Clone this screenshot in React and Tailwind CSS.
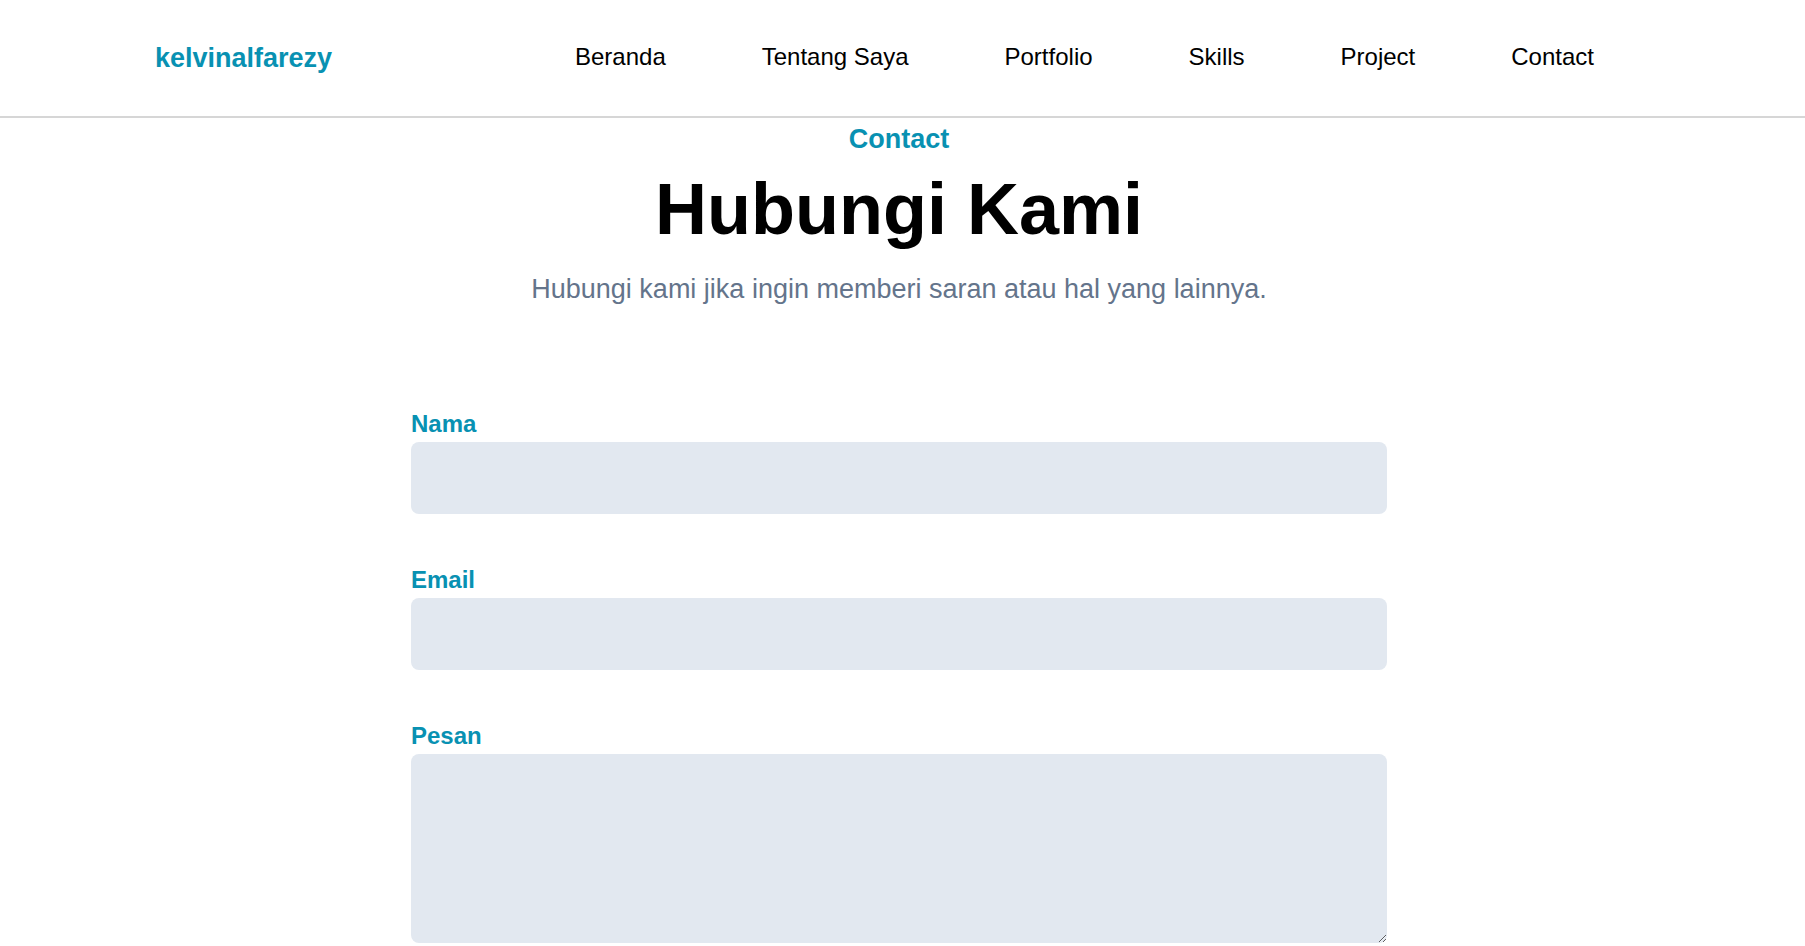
import React from "react";

const navItems = ["Beranda", "Tentang Saya", "Portfolio", "Skills", "Project", "Contact"];

const Header = () => (
  <header className="h-[118px] flex items-center justify-between pl-[155px] pr-[211px] pt-[1px] border-b-2 border-[#d6d6d6] bg-white">
    <a href="#" className="text-[27px] font-bold text-[#0891b2] leading-none">kelvinalfarezy</a>
    <nav>
      <ul className="flex items-center gap-24">
        {navItems.map((item) => (
          <li key={item}>
            <a href="#" className="text-[24px] text-black leading-none">{item}</a>
          </li>
        ))}
      </ul>
    </nav>
  </header>
);

const Field = ({ label, children, last }) => (
  <div className={last ? "" : "mb-12"}>
    <label className="block text-[24px] leading-[36px] font-bold text-[#0891b2]">{label}</label>
    {children}
  </div>
);

export default function App() {
  return (
    <div className="min-h-screen bg-white text-black" style={{ fontFamily: '"Liberation Sans", Arial, sans-serif' }}>
      <Header />
      <main className="pr-[7px] pt-[1px]">
        <section className="flex flex-col items-center text-center">
          <div className="text-[27px] leading-[40px] font-bold text-[#0891b2]">Contact</div>
          <h1 className="mt-[14px] text-[72px] leading-none font-bold">Hubungi Kami</h1>
          <p className="mt-[24px] text-[27px] leading-[40px] text-[#64748b]">
            Hubungi kami jika ingin memberi saran atau hal yang lainnya.
          </p>
        </section>

        <form className="w-[976px] mx-auto mt-[97px]">
          <Field label="Nama">
            <input type="text" className="block w-full h-[72px] rounded-lg bg-[#e2e8f0] px-4 text-[20px] outline-none" />
          </Field>
          <Field label="Email">
            <input type="email" className="block w-full h-[72px] rounded-lg bg-[#e2e8f0] px-4 text-[20px] outline-none" />
          </Field>
          <Field label="Pesan" last>
            <textarea className="block w-full h-[189px] rounded-lg bg-[#e2e8f0] p-4 text-[20px] outline-none" />
          </Field>
        </form>
      </main>
    </div>
  );
}
